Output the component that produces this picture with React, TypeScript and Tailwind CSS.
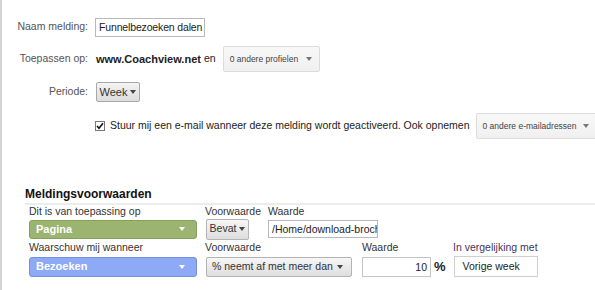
import React from 'react';

function Caret({ color = '#555' }: { color?: string }) {
  return (
    <span
      className="inline-block w-0 h-0 border-l-[3.5px] border-r-[3.5px] border-t-[4px] border-l-transparent border-r-transparent"
      style={{ borderTopColor: color }}
    />
  );
}

export default function App() {
  return (
    <div className="w-[595px] h-[290px] bg-white border-l-2 border-[#d4d4d4] font-['Liberation_Sans',Arial,sans-serif] text-[10.5px] text-[#222] overflow-hidden">
      {/* Top form */}
      <div className="flex items-center h-[20px] mt-[17px]">
        <span className="w-[86px] text-right text-[#555]">Naam melding:</span>
        <div className="ml-[7px] w-[110px] h-[19px] border border-[#b9b9b9] px-[3px] leading-[17px] whitespace-nowrap overflow-hidden tracking-[-0.15px]">
          Funnelbezoeken dalen
        </div>
      </div>

      <div className="flex items-center h-[26px] mt-[9px]">
        <span className="w-[86px] text-right text-[#555]">Toepassen op:</span>
        <span className="ml-[8px] font-bold text-[11px] text-[#222]">www.Coachview.net</span>
        <span className="ml-[3px] text-[#222]">en</span>
        <div className="ml-[7px] w-[97px] h-[26px] border border-[#dcdcdc] rounded-[2px] bg-gradient-to-b from-[#f8f8f8] to-[#f0f0f0] flex items-center justify-between pl-[6px] pr-[7px] text-[8.5px] text-[#444]">
          <span className="whitespace-nowrap">0 andere profielen</span>
          <Caret color="#777" />
        </div>
      </div>

      <div className="flex items-center h-[20px] mt-[10px]">
        <span className="w-[86px] text-right text-[#555]">Periode:</span>
        <div className="ml-[8px] w-[44px] h-[20px] border border-[#a9a9a9] rounded-[2px] bg-gradient-to-b from-[#f4f4f4] to-[#dcdcdc] flex items-center justify-center gap-[3px] text-[11px] text-[#333]">
          <span>Week</span>
          <Caret color="#444" />
        </div>
      </div>

      <div className="flex items-center h-[26px] mt-[11px]">
        <div className="ml-[93px] w-[10px] h-[10px] border border-[#777] bg-white flex items-center justify-center">
          <svg width="8" height="8" viewBox="0 0 8 8">
            <path d="M1 4 L3 6.2 L7 1.2" stroke="#111" strokeWidth="1.6" fill="none" />
          </svg>
        </div>
        <span className="ml-[5px] text-[#222] whitespace-nowrap">
          Stuur mij een e-mail wanneer deze melding wordt geactiveerd. Ook opnemen
        </span>
        <div className="ml-[6px] w-[122px] h-[26px] border border-[#dcdcdc] rounded-[2px] bg-gradient-to-b from-[#f8f8f8] to-[#f0f0f0] flex items-center justify-between pl-[6px] pr-[8px] text-[8.5px] text-[#444] shrink-0">
          <span className="whitespace-nowrap">0 andere e-mailadressen</span>
          <Caret color="#777" />
        </div>
      </div>

      {/* Conditions */}
      <div className="ml-[23px] mt-[47px]">
        <div className="font-bold text-[12px] text-[#111] leading-[16px]">Meldingsvoorwaarden</div>
        <div className="mt-[1px] h-[2px] bg-[#ececec]" />

        <div className="flex items-center h-[14px] text-[#333]">
          <span className="ml-[4px] w-[176px]">Dit is van toepassing op</span>
          <span className="w-[63px]">Voorwaarde</span>
          <span>Waarde</span>
        </div>
        <div className="flex items-center h-[20px]">
          <div className="ml-[4px] w-[168px] h-[19px] rounded-[3px] bg-[#9bb46f] border border-[#85a05a] flex items-center justify-between pl-[6px] pr-[11px] text-white font-bold text-[11px]">
            <span>Pagina</span>
            <Caret color="#fff" />
          </div>
          <div className="ml-[9px] w-[43px] h-[21px] border border-[#b4b4b4] rounded-[2px] bg-gradient-to-b from-[#f6f6f6] to-[#dedede] flex items-center justify-center gap-[3px] text-[#333]">
            <span>Bevat</span>
            <Caret color="#444" />
          </div>
          <div className="ml-[19px] w-[110px] h-[18px] border border-[#b9b9b9] px-[3px] leading-[16px] whitespace-nowrap overflow-hidden text-[#222]">
            /Home/download-brochure
          </div>
        </div>

        <div className="flex items-center h-[14px] mt-[2px] text-[#333]">
          <span className="ml-[4px] w-[176px]">Waarschuw mij wanneer</span>
          <span className="w-[157px]">Voorwaarde</span>
          <span className="w-[91px]">Waarde</span>
          <span className="text-[#4a3358]">In vergelijking met</span>
        </div>
        <div className="flex items-center h-[21px] mt-[1px]">
          <div className="ml-[4px] w-[168px] h-[20px] rounded-[3px] bg-[#8eaaf6] border border-[#7390e0] flex items-center justify-between pl-[6px] pr-[11px] text-white font-bold text-[11px]">
            <span>Bezoeken</span>
            <Caret color="#fff" />
          </div>
          <div className="ml-[9px] w-[146px] h-[20px] border border-[#b4b4b4] rounded-[2px] bg-gradient-to-b from-[#f6f6f6] to-[#dedede] flex items-center justify-between pl-[5px] pr-[8px] text-[#333]">
            <span className="whitespace-nowrap">% neemt af met meer dan</span>
            <Caret color="#444" />
          </div>
          <div className="ml-[10px] w-[69px] h-[20px] border border-[#c4c4c4] px-[3px] text-right leading-[18px] text-[#222]">
            10
          </div>
          <span className="ml-[3px] font-bold text-[13px] text-[#222]">%</span>
          <div className="ml-[8px] w-[84px] h-[21px] border border-[#cfcfcf] pl-[8px] leading-[19px] text-[#222]">
            Vorige week
          </div>
        </div>
      </div>
    </div>
  );
}
